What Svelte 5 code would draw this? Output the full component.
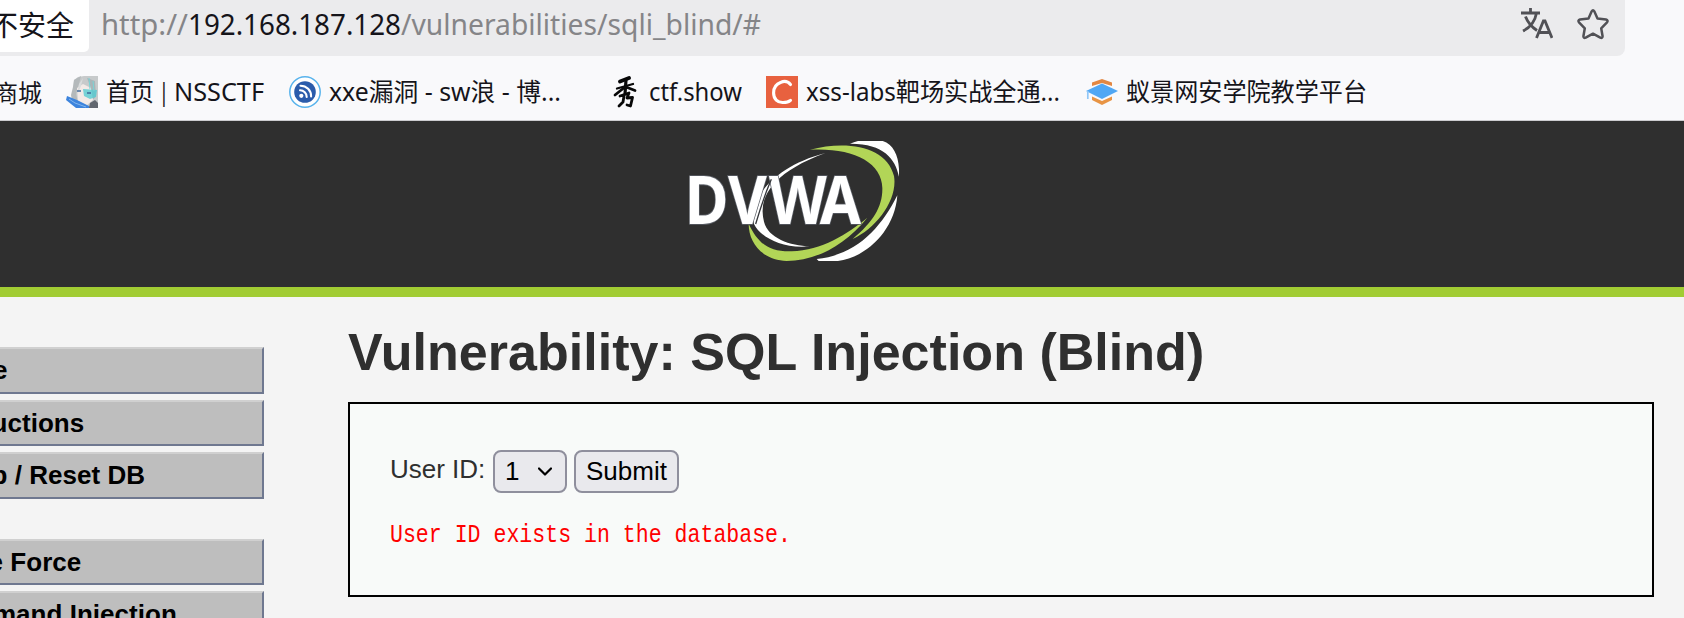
<script>
  const menuGroups = [
    ['Home', 'Instructions', 'Setup / Reset DB'],
    ['Brute Force', 'Command Injection']
  ];
  const bookmarks = [
    { icon: 'anime', parts: [['首页', 48], [' | ', 20], ['NSSCTF', 90]], width: 159 },
    { icon: 'rss', parts: [['xxe漏洞 - sw浪 - 博...', 232]], width: 256 },
    { icon: 'xiu', parts: [['ctf.show', 93]], width: 93 },
    { icon: 'c', parts: [['xss-labs靶场实战全通...', 254]], width: 256 },
    { icon: 'cap', parts: [['蚁景网安学院教学平台', 241]], width: 242 }
  ];
</script>

{#snippet fitted(text, width, size, baseline, height)}
  <svg class="fitted" {width} {height}>
    <text x="0" y={baseline} font-size={size} textLength={width} lengthAdjust="spacingAndGlyphs" xml:space="preserve">{text}</text>
  </svg>
{/snippet}

{#snippet favicon(name)}
  <svg class="favicon" width="32" height="32" viewBox="0 0 32 32">
    {#if name === 'anime'}
      <path d="M8 4 12 1 18 0H32V32H16L5 27 7 18Z" fill="#c7cacb" />
      <path d="M8 4 15 0 13 8 10 18 12 27 6 25 5 19 7 11Z" fill="#b4b9bb" />
      <path d="M11 12 17 8 25 12 28 23 20 30 12 26Z" fill="#f2eae7" />
      <path d="M17 2 15 10 11 19 13 8Z" fill="#d9dcdd" />
      <path d="M21 2 29 5 30 20 27 24 25 12Z" fill="#aab5b8" />
      <path d="M17 13 31 14 30 21 24 23 18 20Z" fill="#55ccd2" opacity=".8" />
      <path d="M23 2 24 13M27 5 28 15" stroke="#7bd4d7" />
      <path d="M11 15h4M21 17h4" stroke="#416a9a" stroke-width="1.600" />
      <path d="M1 20 11 24 23 30 25 32H10L0 24Z" fill="#3d84dd" />
      <path d="M3 23 9 27 20 31" fill="none" stroke="#83b6ee" />
      <path d="M24 27 29 24 32 27V32H23Z" fill="#62676f" />
    {:else if name === 'rss'}
      <circle cx="16" cy="16" r="15.2" fill="#fff" stroke="#58b3ec" stroke-width="1.5" />
      <circle cx="16" cy="16" r="10.8" fill="#2b5cab" />
      <circle cx="12.3" cy="19.8" r="2.1" fill="#fff" />
      <path d="M11 14.3a6.6 6.6 0 0 1 6.7 6.7M11.5 9.7A10.5 10.5 0 0 1 22.1 20.5" fill="none" stroke="#fff" stroke-width="2.1" stroke-linecap="round" />
    {:else if name === 'xiu'}
      <g fill="none" stroke="#080808" stroke-linecap="round" stroke-linejoin="round">
        <path d="M20 2 11 5.500" stroke-width="3.800" />
        <path d="M8 12.500 24 8" stroke-width="2.300" />
        <path d="M17 4 16 18" stroke-width="3.200" />
        <path d="M16 11 6 19M17 11 26 14.500" stroke-width="2.800" />
        <path d="M11 20 20 17 18 22 23.500 21.500 21.500 30 18 29M15 20 14 26 10 30" stroke-width="2.800" />
      </g>
    {:else if name === 'c'}
      <path d="M0 0H32V32H0Z" fill="#e8613f" />
      <path d="M24.5 8.5C22 5.5 18.5 4.8 15 6.2 10 8 7.5 12 7.6 17c0 6 4 9.8 9.5 9.5 3.5 0 5.700-.7 7.400-2.200" fill="none" stroke="#fff" stroke-width="3.100" stroke-linecap="round" />
    {:else}
      <path d="M6 10V6.500L16 3 26 6.500V10L16 7Z" fill="#e38742" />
      <path d="M6 20.500 16 25 26 20.500V24L16 29 6 24Z" fill="#e89444" />
      <path d="M0 15 16 7.500 32 15 16 23Z" fill="#50a7f4" />
      <path d="M1.800 15V23" stroke="#91c7f7" stroke-width="1.700" />
    {/if}
  </svg>
{/snippet}

<div class="window">
  <div class="urlbar">
    <div class="identity"><span>不安全</span></div>
    <div class="address">
      <span class="dim">{@render fitted('http://', 87, 29, 35, 56)}</span>
      <span>{@render fitted('192.168.187.128', 213, 29, 35, 56)}</span>
      <span class="dim">{@render fitted('/vulnerabilities/sqli_blind/#', 360, 29, 35, 56)}</span>
    </div>
    <div class="tools">
      <svg width="32" height="32" viewBox="0 0 32 32" fill="none" stroke="#515156" stroke-width="2.800">
        <path d="M0 5H19M9.500 0V5M4.500 8.500C6.500 14 10 18.500 16 22.500M15.500 5C14 13.500 9 19.500 2 23" />
        <path d="M15.500 30 22.400 13H24L31 30M18.300 24.500H28.300" />
      </svg>
      <svg width="32" height="32" viewBox="0 0 32 32" fill="none" stroke="#515156" stroke-width="2.500" stroke-linejoin="round">
        <path d="M14.700 3.300Q16 1.200 17.300 3.300L20.500 10.500 29 11.500Q31.500 12.200 30 14.300L24.200 20.300 25.600 28.300Q25.500 30.500 23.300 29.700L16 25.700 8.700 29.700Q6.500 30.500 6.400 28.300L7.800 20.300 2 14.300Q.5 12.200 3 11.500L11.500 10.500Z" />
      </svg>
    </div>
  </div>

  <div class="bookmarks">
    <span class="cut">商城</span>
    {#each bookmarks as b}
      <div class="bookmark" style="width: {b.width + 40}px">
        {@render favicon(b.icon)}
        <div class="parts">
          {#each b.parts as [text, width]}
            {@render fitted(text, width, 24.5, 25, 32)}
          {/each}
        </div>
      </div>
    {/each}
  </div>

  <header>
    <svg width="210" height="120" viewBox="57 63 630 360">
      <path d="M540 71Q580 54 625 60C671 66 690 110 687 170C676 116 640 70 540 71Z" fill="#fff" />
      <path d="M420 89C530 60 650 78 672 168C684 238 620 325 548 357C610 305 638 260 637 204C636 125 545 82 420 89Z" fill="#b2d557" />
      <path d="M682 226C674 340 575 425 485 424H447L440 417C560 405 632 325 682 226Z" fill="#fff" />
      <path d="M466 99C300 160 264 238 282 305C294 354 360 377 420 379C335 388 270 350 252 312C235 245 302 142 466 99Z" fill="#fff" />
      <path d="M236 311C264 370 296 396 365 394C456 390 530 344 592 293C520 382 430 423 350 423C278 420 236 370 236 311Z" fill="#b2d557" />
      <g transform="scale(.9 1)">
        <text class="brand" y="311" x="49 193 330 499">DVWA</text>
      </g>
      <path d="M304 178C286 220 271 265 257 312" fill="none" stroke="#34363a" stroke-width="4" />
    </svg>
  </header>

  <main>
    <nav>
      {#each menuGroups as group}
        <ul>
          {#each group as item}
            <li>{item}</li>
          {/each}
        </ul>
      {/each}
    </nav>
    <section>
      <h1>Vulnerability: SQL Injection (Blind)</h1>
      <div class="panel">
        <form onsubmit={(e) => e.preventDefault()}>
          <span class="label">User ID:</span>
          <button type="button" class="select">
            1
            <svg width="14" height="10" viewBox="0 0 14 10"><path d="M1 1.500 7 7.500 13 1.500" fill="none" stroke="#000" stroke-width="2.200" stroke-linecap="round" stroke-linejoin="round" /></svg>
          </button>
          <button type="submit">Submit</button>
        </form>
        <div class="result">{@render fitted('User ID exists in the database.', 401, 26, 24, 34)}</div>
      </div>
    </section>
  </main>
</div>

<style>
  :global(body) {
    margin: 0;
    overflow: hidden;
  }
  .window {
    height: 618px;
    overflow: hidden;
    background: #f9f9fb;
    color: #15141a;
    font-family: 'Liberation Sans', Arial, sans-serif;
  }
  svg {
    display: block;
    flex: none;
  }
  .fitted {
    overflow: visible;
    fill: currentColor;
    font-family: 'Noto Sans', 'Noto Sans CJK SC', sans-serif;
  }
  .urlbar {
    display: flex;
    width: 1625px;
    height: 56px;
    border-radius: 0 0 8px 0;
    background: #ebebed;
  }
  .identity {
    display: flex;
    justify-content: flex-end;
    box-sizing: border-box;
    width: 89px;
    height: 52px;
    padding-right: 15px;
    overflow: hidden;
    border-radius: 0 0 5px 0;
    background: #fff;
    font: 28px/49px 'Noto Sans CJK SC', sans-serif;
    white-space: nowrap;
  }
  .address {
    display: flex;
    flex: 1;
    padding-left: 12px;
  }
  .dim {
    color: #858588;
  }
  .tools {
    display: flex;
    gap: 24px;
    padding: 8px 16px 0 0;
  }
  .bookmarks {
    display: flex;
    gap: 24px;
    box-sizing: border-box;
    height: 65px;
    padding-top: 20px;
    border-bottom: 1px solid #cccccf;
  }
  .cut {
    display: flex;
    justify-content: flex-end;
    width: 42px;
    height: 32px;
    overflow: hidden;
    font: 24px/31px 'Noto Sans CJK SC', sans-serif;
    white-space: nowrap;
  }
  .bookmark {
    display: flex;
    flex: none;
    gap: 8px;
  }
  .parts {
    display: flex;
  }
  header {
    box-sizing: border-box;
    height: 176px;
    padding: 20px 0 0 689px;
    border-bottom: 10px solid #a1cc33;
    background: #2f2f2f;
  }
  .brand {
    fill: #fff;
    stroke: #5c6068;
    stroke-width: 5px;
    paint-order: stroke;
    font: bold 199px 'Noto Sans', sans-serif;
  }
  main {
    display: flex;
    height: 321px;
    background: #f4f4f4;
  }
  nav {
    flex: none;
    width: 340px;
    margin-left: -76px;
    padding-top: 50px;
  }
  ul {
    display: grid;
    gap: 6px;
    margin: 0 0 40px;
    padding: 0;
    list-style: none;
  }
  li {
    box-sizing: border-box;
    height: 46px;
    padding-left: 9px;
    border: 2px solid #6f7890;
    border-top-color: #d0d0d0;
    background: #bebebe;
    color: #000;
    font-size: 26px;
    font-weight: bold;
    letter-spacing: 0.04px;
    line-height: 42px;
  }
  ul:first-child li:nth-child(odd) {
    height: 47px;
  }
  section {
    width: 1306px;
    margin-left: 84px;
  }
  h1 {
    margin: 25px 0 20px;
    color: #2f2f2f;
    font-size: 52px;
    letter-spacing: 0.03px;
    line-height: 60px;
    white-space: nowrap;
  }
  .panel {
    box-sizing: border-box;
    height: 195px;
    padding: 46px 40px 0;
    border: 2px solid #000;
    background: #f8faf9;
  }
  form {
    display: flex;
    height: 43px;
    color: #2f2f2f;
    font-size: 26px;
  }
  .label {
    width: 103px;
    line-height: 38px;
  }
  button {
    box-sizing: border-box;
    width: 105px;
    height: 43px;
    padding: 0;
    border: 2px solid #8f8f9d;
    border-radius: 8px;
    background: #e9e9ed;
    color: #000;
    font: 26px/39px 'Liberation Sans', Arial, sans-serif;
  }
  .select {
    display: flex;
    align-items: center;
    justify-content: space-between;
    width: 74px;
    margin-right: 7px;
    padding: 0 13px 0 10px;
  }
  .result {
    margin: 25px 0 0;
    color: #f00;
  }
  .result :global(.fitted) {
    font-family: 'Liberation Mono', monospace;
  }
</style>
